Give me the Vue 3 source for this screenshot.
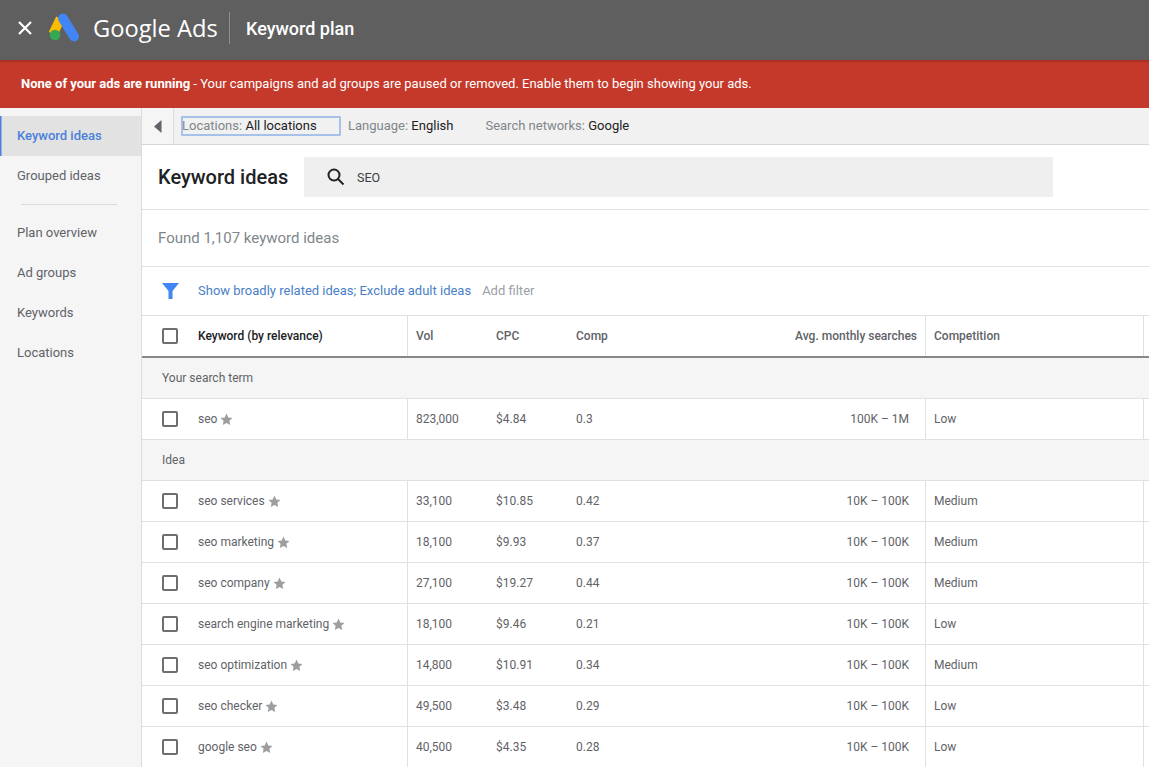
<script setup>
const nav2 = ['Plan overview', 'Ad groups', 'Keywords', 'Locations']
const rows = [
  { k: 'seo services', v: '33,100', c: '$10.85', p: '0.42', a: '10K – 100K', m: 'Medium' },
  { k: 'seo marketing', v: '18,100', c: '$9.93', p: '0.37', a: '10K – 100K', m: 'Medium' },
  { k: 'seo company', v: '27,100', c: '$19.27', p: '0.44', a: '10K – 100K', m: 'Medium' },
  { k: 'search engine marketing', v: '18,100', c: '$9.46', p: '0.21', a: '10K – 100K', m: 'Low' },
  { k: 'seo optimization', v: '14,800', c: '$10.91', p: '0.34', a: '10K – 100K', m: 'Medium' },
  { k: 'seo checker', v: '49,500', c: '$3.48', p: '0.29', a: '10K – 100K', m: 'Low' },
  { k: 'google seo', v: '40,500', c: '$4.35', p: '0.28', a: '10K – 100K', m: 'Low' },
]
const first = { k: 'seo', v: '823,000', c: '$4.84', p: '0.3', a: '100K – 1M', m: 'Low' }
const starPath = 'M6.5 0.5l1.8 3.9 4.2.5-3.1 2.9.8 4.2-3.7-2.1-3.7 2.1.8-4.2L.5 4.9l4.2-.5z'
</script>

<template>
  <div class="page">
    <header class="top">
      <svg class="close" width="16" height="16" viewBox="0 0 16 16"><path d="M2 2l12 12M14 2L2 14" stroke="#fff" stroke-width="2.2" /></svg>
      <svg class="logo" width="32" height="32" viewBox="0 0 32 32">
        <path d="M12.500 6.500L5 22" stroke="#fbbc04" stroke-width="9.500" />
        <path d="M15 6.500l11 18" stroke="#4285f4" stroke-width="10" stroke-linecap="round" />
        <circle cx="7" cy="23" r="5.300" fill="#34a853" />
      </svg>
      <span class="brand">Google Ads</span>
      <span class="sep"></span>
      <span class="plan">Keyword plan</span>
    </header>
    <div class="banner"><b>None of your ads are running</b> - Your campaigns and ad groups are paused or removed. Enable them to begin showing your ads.</div>
    <div class="body">
      <aside class="side">
        <div class="nav active">Keyword ideas</div>
        <div class="nav">Grouped ideas</div>
        <div class="rule"></div>
        <div v-for="n in nav2" :key="n" class="nav">{{ n }}</div>
      </aside>
      <main class="main">
        <div class="toolbar">
          <div class="toggle"><svg width="8" height="13" viewBox="0 0 8 13"><path d="M7.5 0v13L0 6.500z" fill="#5f6368" /></svg></div>
          <div class="crumb first"><span>Locations:</span> All locations</div>
          <div class="crumb lang"><span>Language:</span> English</div>
          <div class="crumb net"><span>Search networks:</span> Google</div>
        </div>
        <div class="titlebar">
          <h1>Keyword ideas</h1>
          <div class="search">
            <svg width="20" height="20" viewBox="0 0 20 20" fill="none"><circle cx="8" cy="8" r="5.500" stroke="#202124" stroke-width="2" /><path d="M12 12l5.500 5.500" stroke="#202124" stroke-width="2" /></svg>
            <span>SEO</span>
          </div>
        </div>
        <div class="found">Found 1,107 keyword ideas</div>
        <div class="filter">
          <svg width="17" height="16" viewBox="0 0 17 16"><path d="M0 0h17L10.500 8v8h-4V8z" fill="#4285f4" /></svg>
          <span class="link">Show broadly related ideas; Exclude adult ideas</span>
          <span class="add">Add filter</span>
        </div>
        <div class="row head">
          <div class="c kw"><i class="box"></i><b>Keyword (by relevance)</b></div>
          <div class="c vol">Vol</div>
          <div class="c cpc">CPC</div>
          <div class="c cmp">Comp</div>
          <div class="c avg headavg">Avg. monthly searches</div>
          <div class="c comp">Competition</div>
          <div class="c end"></div>
        </div>
        <div class="group">Your search term</div>
        <div class="row">
          <div class="c kw"><i class="box"></i>{{ first.k }}<svg class="star" width="13" height="13" viewBox="0 0 13 13"><path :d="starPath" fill="#9e9e9e" /></svg></div>
          <div class="c vol">{{ first.v }}</div>
          <div class="c cpc">{{ first.c }}</div>
          <div class="c cmp">{{ first.p }}</div>
          <div class="c avg">{{ first.a }}</div>
          <div class="c comp">{{ first.m }}</div>
          <div class="c end"></div>
        </div>
        <div class="group">Idea</div>
        <div v-for="r in rows" :key="r.k" class="row">
          <div class="c kw"><i class="box"></i>{{ r.k }}<svg class="star" width="13" height="13" viewBox="0 0 13 13"><path :d="starPath" fill="#9e9e9e" /></svg></div>
          <div class="c vol">{{ r.v }}</div>
          <div class="c cpc">{{ r.c }}</div>
          <div class="c cmp">{{ r.p }}</div>
          <div class="c avg">{{ r.a }}</div>
          <div class="c comp">{{ r.m }}</div>
          <div class="c end"></div>
        </div>
      </main>
    </div>
  </div>
</template>

<style>
html, body { margin: 0; overflow: hidden; background: #fff; }
</style>

<style scoped>
.page { width: 1149px; height: 767px; overflow: hidden; font-family: Roboto, "Liberation Sans", sans-serif; color: #5f6368; }
.top { height: 60px; box-sizing: border-box; padding-bottom: 4px; background: #5f5f5f; display: flex; align-items: center; }
.close { margin-left: 17px; flex: none; }
.logo { margin-left: 15px; flex: none; }
.brand { margin-left: 13px; width: 124px; color: #fff; font-size: 23.700px; white-space: nowrap; font-family: "Open Sans", Roboto, sans-serif; }
.sep { width: 1px; height: 32px; background: #8f8f8f; margin-left: 12px; }
.plan { margin-left: 16px; color: #fff; font-size: 18px; font-weight: 500; }
.banner { height: 48px; background: #c5392a; color: #fff; font-size: 13px; line-height: 47px; padding-left: 21px; box-sizing: border-box; box-shadow: inset 0 3px 3px -2px rgba(0,0,0,.25); }
.banner b { font-weight: 700; }
.body { display: flex; }
.side { width: 142px; flex: none; height: 659px; box-sizing: border-box; background: #f5f5f5; border-right: 1px solid #dadce0; padding-top: 8px; }
.nav { height: 40px; line-height: 39px; padding-left: 17px; font-size: 13px; color: #5f6368; }
.nav.active { background: #e2e2e2; color: #4a80dd; font-weight: 500; box-shadow: inset 1.500px 0 0 #4a80dd; }
.rule { height: 1px; background: #dadce0; margin: 8px 24px 8px 21px; }
.main { flex: 1; min-width: 0; }
.toolbar { height: 37px; box-sizing: border-box; background: #f1f1f1; border-bottom: 1px solid #d6d6d6; display: flex; align-items: center; font-size: 13px; color: #202124; }
.toggle { width: 32px; height: 36px; box-sizing: border-box; background: #f5f5f5; border-right: 1px solid #dadce0; display: flex; align-items: center; justify-content: center; flex: none; }
.crumb { white-space: nowrap; }
.crumb span { color: #80868b; }
.crumb.first { width: 160px; height: 20px; box-sizing: border-box; margin-left: 7px; border: 2px solid #a6c1ea; border-radius: 1px; line-height: 16px; }
.crumb.first span { margin-left: -1px; }
.crumb.lang { margin-left: 7px; margin-bottom: 2px; }
.crumb.net { margin-left: 32px; margin-bottom: 2px; }
.titlebar { height: 65px; box-sizing: border-box; border-bottom: 1px solid #e0e0e0; display: flex; align-items: center; }
h1 { margin: 0 0 0 16px; font-size: 20px; font-weight: 500; color: #202124; width: 146px; }
.search { width: 749px; height: 40px; background: #efefef; display: flex; align-items: center; padding-left: 22px; box-sizing: border-box; font-size: 12.500px; color: #3c4043; gap: 11px; }
.found { height: 57px; line-height: 57px; box-sizing: border-box; border-bottom: 1px solid #e0e0e0; padding-left: 16px; font-size: 15px; color: #80868b; }
.filter { height: 49px; box-sizing: border-box; border-bottom: 1px solid #e0e0e0; display: flex; align-items: center; padding-left: 20px; padding-bottom: 1px; font-size: 13px; }
.link { margin-left: 19px; color: #4a80c8; }
.add { margin-left: 11px; color: #9aa0a6; }
.row { display: flex; height: 41px; box-sizing: border-box; border-bottom: 1px solid #e0e0e0; font-size: 12px; color: #5f6368; background: #fff; }
.row.head { height: 42px; border-bottom: 2px solid #88888c; }
.c { display: flex; align-items: center; box-sizing: border-box; white-space: nowrap; }
.kw { width: 266px; padding-left: 20px; border-right: 1px solid #e0e0e0; }
.kw b { font-weight: 500; color: #202124; }
.box { width: 12px; height: 12px; border: 2px solid #6e6e6e; border-radius: 2px; margin-right: 20px; flex: none; }
.star { margin-left: 3px; }
.vol { width: 80px; padding-left: 8px; }
.cpc { width: 80px; padding-left: 8px; }
.cmp { width: 80px; padding-left: 8px; }
.avg { width: 278px; padding-right: 16px; justify-content: flex-end; border-right: 1px solid #e0e0e0; }
.headavg { padding-right: 8px; font-weight: 500; }
.head .vol, .head .cpc, .head .cmp, .head .comp { font-weight: 500; }
.comp { width: 218px; padding-left: 8px; border-right: 1px solid #e0e0e0; }
.end { flex: 1; }
.group { height: 41px; line-height: 40px; box-sizing: border-box; background: #f5f5f5; border-bottom: 1px solid #e0e0e0; padding-left: 20px; font-size: 12px; color: #5f6368; }
</style>
